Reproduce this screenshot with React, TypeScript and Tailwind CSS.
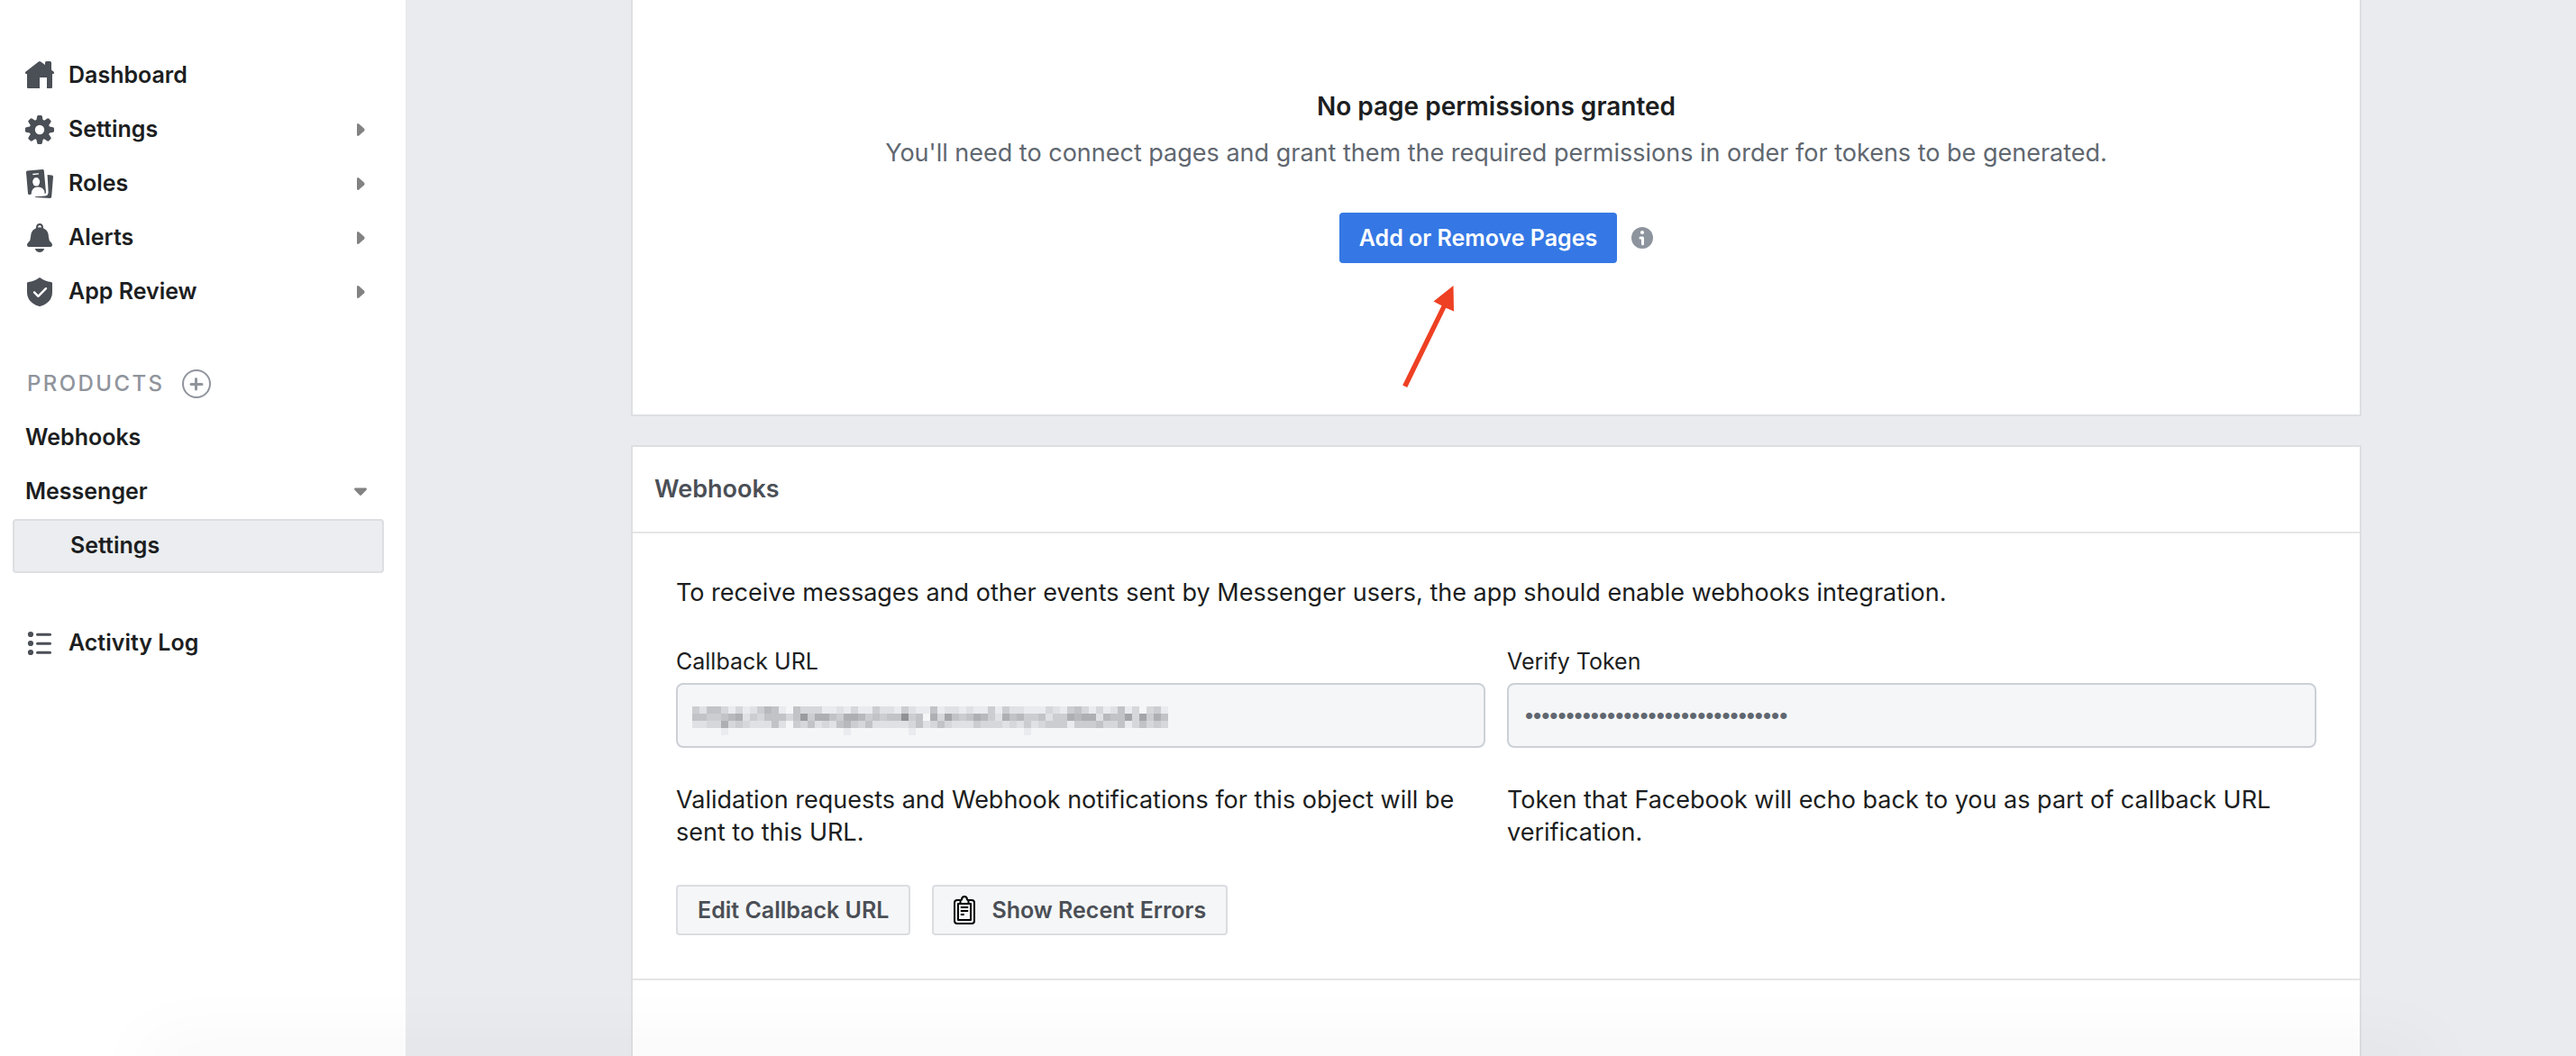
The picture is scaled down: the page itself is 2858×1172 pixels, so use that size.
import type { ReactNode } from 'react';

function Icon({ children }: { children: ReactNode }) {
  return (
    <svg viewBox="0 0 16 16" className="size-8 shrink-0 fill-[#4b4f56]" aria-hidden="true">
      {children}
    </svg>
  );
}

const house = (
  <Icon>
    <path d="M7.4.25Q8 -.15 8.6.25L11 2V.8Q11 0 11.8 0H13.7Q14.5 0 14.5.8V4.7L15.7 5.7Q16.2 6.2 15.9 6.7Q15.6 7.1 15 7V14.4Q15 15 14.4 15H12V9H8V15H1.6Q1 15 1 14.4V7Q.4 7.1.1 6.7Q-.2 6.2.3 5.7Z" />
  </Icon>
);

const gear = (
  <Icon>
    <circle cx="8" cy="8" r="5.7" />
    {[0, 45, 90, 135, 180, 225, 270, 315].map((angle) => (
      <path key={angle} transform={`rotate(${angle} 8 8)`} d="M6 3.5L6.6.6Q6.75 0 7.3 0H8.7Q9.25 0 9.4.6L10 3.5Z" />
    ))}
    <circle cx="8" cy="8" r="2.6" className="fill-white" />
  </Icon>
);

const badges = (
  <Icon>
    <path d="M.5 1.5Q.5.8 1.2.75L9.6 0Q10.3 0 10.4.6L11.5 12.8Q11.5 13.4 10.8 13.5Q10.8 9.9 7 9.8Q3.4 9.9 3.3 13.9L2.2 14Q1.5 14 1.5 13.4Z" />
    <path d="M12.3 3L14.8 3.2Q15.5 3.3 15.5 4L14.6 15.3Q14.5 16 13.8 16L5.5 15.5V15.1L11 14.8Q12.9 14.5 12.8 12.5Z" />
    <path d="M4.2 2.4L7.3 2.1Q7.7 2.2 7.5 2.8L4.4 3.1Q3.9 2.9 4.2 2.4Z" className="fill-white" />
    <ellipse cx="6.1" cy="6.9" rx="2" ry="2.4" className="fill-white" />
  </Icon>
);

const bell = (
  <Icon>
    <path fillRule="evenodd" d="M6 2.6Q5.9 0 8 0Q10.1 0 10 2.6Q12.9 3.8 13 7.6Q13 9.4 14.4 10.6Q15 11.2 15 12Q15 13 14 13H2Q1 13 1 12Q1 11.2 1.6 10.6Q3 9.4 3 7.6Q3.1 3.8 6 2.6ZM7 2.3Q8 2 9 2.3Q9 1 8 1Q7 1 7 2.3Z" />
    <path d="M5.4 14H10.6Q9.9 16 8 16Q6.1 16 5.4 14Z" />
  </Icon>
);

const shield = (
  <Icon>
    <path d="M7.5.2Q8 -.15 8.5.2Q11 2.1 14.4 2.5Q15 2.6 15 3.2V8Q15 13.8 8.5 15.9Q8 16.1 7.5 15.9Q1 13.8 1 8V3.2Q1 2.6 1.6 2.5Q5 2.1 7.5.2Z" />
    <path d="M5 8.2L7.2 10.4L11.5 6.1" className="fill-none stroke-white" strokeWidth="1.2" strokeLinecap="round" strokeLinejoin="round" />
  </Icon>
);

const list = (
  <Icon>
    {[3, 8, 13].map((y) => (
      <g key={y}>
        <circle cx="3" cy={y} r="1.55" />
        <rect x="6" y={y - 0.6} width="8.5" height="1.5" rx=".75" />
      </g>
    ))}
  </Icon>
);

function Caret({ open = false }: { open?: boolean }) {
  return (
    <svg viewBox="0 0 16 16" className="ml-auto size-4 fill-[#828282]" aria-hidden="true">
      {open ? (
        <path d="M1.9 3.5H14.1Q15.6 4.2 14.6 5.8L9.2 11.3Q8 12.5 6.8 11.3L1.4 5.8Q.4 4.2 1.9 3.5Z" />
      ) : (
        <path d="M4 1.9Q4.7.4 6.3 1.4L12.1 6.8Q13.3 8 12.1 9.2L6.3 14.6Q4.7 15.6 4 14.1Z" />
      )}
    </svg>
  );
}

function NavItem({ icon, label, caret }: { icon?: ReactNode; label: string; caret?: 'closed' | 'open' }) {
  return (
    <a href="#" className="flex h-[60px] items-center gap-4 pr-[42px] pl-7">
      {icon}
      <span>{label}</span>
      {caret && <Caret open={caret === 'open'} />}
    </a>
  );
}

// Shade of each 8px block of the masked callback address, one row per string.
const maskRows = [
  '425531312465105333112131142214211512212114142211132145313125130341',
  '55445672435553594775477645455a450738545764275644524476772655838475',
  '223373432225204352325643522222352353222433323242344414445335135343',
  '000010000000000000000100000000100000000000000010000000000000000000',
];

function Mask() {
  return (
    <svg width="528" height="32" className="pointer-events-none absolute top-[26px] left-[18px]" shapeRendering="crispEdges" aria-hidden="true">
      {maskRows.map((row, y) =>
        row.split('').map((c, x) => {
          const n = parseInt(c, 16);
          return n === 0 ? null : (
            <rect key={`${x}-${y}`} x={x * 8} y={y * 8} width="8" height="8" fill={`rgb(${244 - n * 10} ${245 - n * 10} ${248 - n * 10})`} />
          );
        }),
      )}
    </svg>
  );
}

const field = 'h-[72px] w-full rounded-lg border-2 border-[#ccd0d5] bg-[#f5f6f7] px-[18px] text-[#606770]';
const greyButton = 'flex h-14 items-center rounded border-2 border-[#dadde1] bg-[#f5f6f7] px-[22px] text-[25px] font-semibold text-[#4b4f56]';

export default function App() {
  return (
    <div className="relative flex h-screen overflow-hidden bg-[#e9ebee] font-['Inter',sans-serif] text-[#1c1e21]">
      <nav className="w-[450px] shrink-0 bg-white pt-[54px] text-[25px] font-semibold">
        <NavItem icon={house} label="Dashboard" />
        <NavItem icon={gear} label="Settings" caret="closed" />
        <NavItem icon={badges} label="Roles" caret="closed" />
        <NavItem icon={bell} label="Alerts" caret="closed" />
        <NavItem icon={shield} label="App Review" caret="closed" />
        <div className="mt-[42px] flex h-[60px] items-center gap-5 pl-[30px]">
          <h2 className="text-2xl font-medium tracking-widest text-[#90949c]">PRODUCTS</h2>
          <button type="button" aria-label="Add product">
            <svg viewBox="0 0 32 32" className="block size-8 fill-none stroke-[#90949c]" aria-hidden="true">
              <circle cx="16" cy="16" r="15" strokeWidth="2" />
              <path d="M10 16.5H22M15.5 10.5V22" strokeWidth="3" strokeLinecap="round" />
            </svg>
          </button>
        </div>
        <NavItem label="Webhooks" />
        <NavItem label="Messenger" caret="open" />
        <a href="#" aria-current="page" className="mr-6 ml-[14px] flex h-[60px] items-center rounded border-2 border-[#dddfe2] bg-[#ebedf0] pl-[62px]">
          Settings
        </a>
        <div className="mt-12">
          <NavItem icon={list} label="Activity Log" />
        </div>
      </nav>

      <main className="min-w-0 flex-1 pl-3">
        <div className="mx-auto flex h-full max-w-[1920px] flex-col gap-8 text-[27px] leading-9">
          <section className="flex flex-col items-center border-2 border-t-0 border-[#dddfe2] bg-white pt-[100px] pb-[168px]">
            <h2 className="text-[28px] leading-9 font-semibold">No page permissions granted</h2>
            <p className="mt-4 text-[#606770]">
              You'll need to connect pages and grant them the required permissions in order for tokens to be generated.
            </p>
            <div className="relative mt-12 flex items-center gap-4">
              <button type="button" className="h-14 rounded bg-[#3578e5] px-[22px] text-[25px] font-semibold text-white">
                Add or Remove Pages
              </button>
              <svg viewBox="0 0 24 24" className="size-6" role="img" aria-label="More information">
                <circle cx="12" cy="12" r="12" className="fill-[#8d949e]" />
                <circle cx="12" cy="6" r="2.1" className="fill-white" />
                <path d="M10 12H12.5V18.8" className="fill-none stroke-white" strokeWidth="3" strokeLinecap="round" strokeLinejoin="round" />
              </svg>
              <svg viewBox="0 0 64 120" className="absolute top-20 left-[68px] h-[120px] w-16 fill-[#ee4023]" aria-hidden="true">
                <path d="M58.5 1L59 29.5L50.2 25.8L7.2 114L2.2 111.5L45.5 23.2L36.5 18.5Z" />
              </svg>
            </div>
          </section>

          <section className="flex flex-1 flex-col border-2 border-b-0 border-[#dddfe2] bg-white">
            <h2 className="flex h-24 items-center border-b-2 border-[#e5e5e5] px-6 font-semibold text-[#4b4f56]">Webhooks</h2>
            <div className="border-b-2 border-[#e5e5e5] px-12 pt-12 pb-12">
              <p>To receive messages and other events sent by Messenger users, the app should enable webhooks integration.</p>
              <div className="mt-10 grid grid-cols-2 gap-6">
                <div>
                  <label htmlFor="callback-url" className="block text-[25px] leading-9">Callback URL</label>
                  <div className="relative mt-1.5">
                    <input id="callback-url" type="text" readOnly className={`${field} block`} />
                    <Mask />
                  </div>
                  <p className="mt-10">Validation requests and Webhook notifications for this object will be sent to this URL.</p>
                </div>
                <div>
                  <label htmlFor="verify-token" className="block text-[25px] leading-9">Verify Token</label>
                  <div className="mt-1.5">
                    <input id="verify-token" type="password" readOnly value="xxxxxxxxxxxxxxxxxxxxxxxxxxxxxxxx" className={`${field} block font-['Liberation_Sans'] text-[26px]`} />
                  </div>
                  <p className="mt-10">Token that Facebook will echo back to you as part of callback URL verification.</p>
                </div>
              </div>
              <div className="mt-10 flex gap-6">
                <button type="button" className={greyButton}>Edit Callback URL</button>
                <button type="button" className={`${greyButton} gap-[18px]`}>
                  <svg viewBox="0 0 24 32" className="h-8 w-6 fill-none stroke-black" strokeWidth="2" strokeLinejoin="round" strokeLinecap="round" aria-hidden="true">
                    <path d="M7.5 5H4Q1 5 1 8V28Q1 31 4 31H20Q23 31 23 28V8Q23 5 20 5H16.5" />
                    <path d="M7.5 8.5V5.5L9 4.5Q9 1 12 1Q15 1 15 4.5L16.5 5.5V8.5" />
                    <path d="M5 9H19V27H5Z" />
                    <path d="M8.5 13H15.5M8.5 17H15.5M8.5 21H11" strokeWidth="1.8" />
                  </svg>
                  Show Recent Errors
                </button>
              </div>
            </div>
          </section>
        </div>
      </main>
      <div className="pointer-events-none absolute inset-x-40 top-full h-10 shadow-[0_-10px_80px_rgba(0,0,0,0.05)]" />
    </div>
  );
}
